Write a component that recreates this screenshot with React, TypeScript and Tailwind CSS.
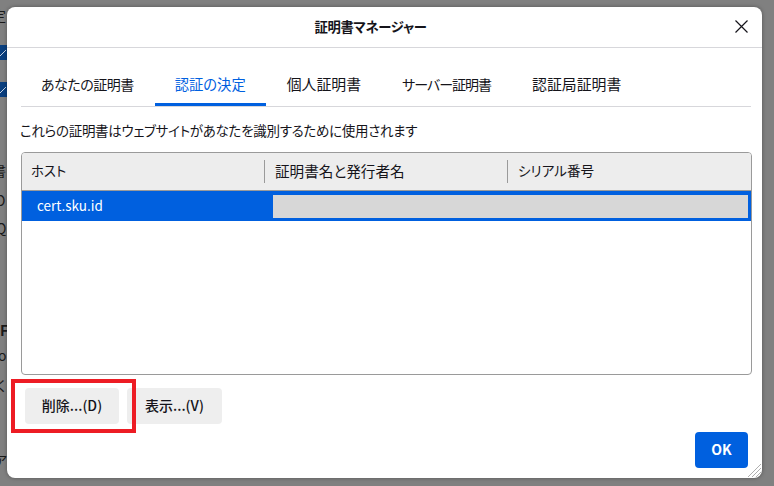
const font = "font-['Noto_Sans_CJK_JP','Noto_Sans',sans-serif]";

function Tab({ label, active, size }: { label: string; active?: boolean; size: string }) {
  return (
    <div
      className={`flex h-[39px] items-center justify-center border-b-[3px] px-5 pb-[2px] ${size} ${
        active ? "border-[#0060df] text-[#0060df]" : "border-transparent text-[#15141a]"
      }`}
    >
      {label}
    </div>
  );
}

function HeaderCell({ label, className, size }: { label: string; className: string; size: string }) {
  return (
    <div className={`flex h-full items-center pb-[2px] ${className}`}>
      <span className={`${size} text-[#15141a]`}>{label}</span>
    </div>
  );
}

function Button({ label, className }: { label: string; className: string }) {
  return (
    <div className={`flex h-9 items-center justify-center rounded-[4px] bg-[#eeeeee] pb-[2px] text-[14px] font-medium text-[#15141a] ${className}`}>
      {label}
    </div>
  );
}

function BackCheck() {
  return (
    <span className="flex h-[15px] w-[7px] items-center overflow-hidden bg-[#0a3f7f]">
      <svg className="h-[10px] w-[7px] shrink-0" viewBox="0 0 7 10" fill="none" stroke="#c8d4e4" strokeWidth="1">
        <path d="M0 8 6 2" />
      </svg>
    </span>
  );
}

export default function App() {
  return (
    <div className={`relative h-[486px] w-[774px] overflow-hidden bg-[#808080] ${font} [font-feature-settings:'palt']`}>
      <div className="flex h-full w-[40px] flex-col text-[14px] leading-[20px] text-[#1a1a1a]">
        <span className="-ml-[8px] mt-[5px] h-[20px]">定</span>
        <div className="mt-[20px]"><BackCheck /></div>
        <div className="mt-[22px]"><BackCheck /></div>
        <span className="-ml-[8px] mt-[63px] h-[20px]">書</span>
        <span className="-ml-[5px] mt-[10px] h-[20px]">O</span>
        <span className="-ml-[4px] mt-[8px] h-[20px] underline">Q</span>
        <span className="mt-[82px] h-[20px] font-bold">F</span>
        <span className="-ml-[2px] mt-[5px] h-[20px]">o</span>
        <span className="-ml-[4px] mt-[10px] h-[20px]">く</span>
        <span className="-ml-[6px] mt-[55px] h-[20px]">ア</span>
      </div>

      <div className="absolute left-[7px] top-[7px] flex h-[471px] w-[755px] flex-col overflow-hidden rounded-[8px] bg-white shadow-[0_0_4px_rgba(0,0,0,0.35)]">
        <div className="relative flex h-[41px] shrink-0 items-center justify-center border-b border-[#d7d7db] pr-[28px] text-[13.33px] font-semibold tracking-[-0.3px] text-[#15141a]">
          証明書マネージャー
          <svg className="absolute right-[13px] top-[12px] h-[15px] w-[15px]" viewBox="0 0 15 15" fill="none" stroke="#15141a" strokeWidth="1.2">
            <path d="M1.5 1.5 13.5 13.5M13.5 1.5 1.5 13.5" />
          </svg>
        </div>

        <div className="flex grow flex-col pl-[14px] pr-[11px]">
          <div className="mt-[19px] flex gap-[1px] border-b border-[#d7d7db]">
            <Tab label="あなたの証明書" size="text-[14px] tracking-[-0.5px]" />
            <Tab label="認証の決定" size="text-[14.3px]" active />
            <Tab label="個人証明書" size="text-[14.9px]" />
            <Tab label="サーバー証明書" size="text-[14px] tracking-[-1px]" />
            <Tab label="認証局証明書" size="text-[14.9px]" />
          </div>

          <p className="-ml-px mt-[13px] text-[13.5px] leading-[20px] tracking-[-0.3px] text-[#15141a]">
            これらの証明書はウェブサイトがあなたを識別するために使用されます
          </p>

          <div className="mt-[12px] flex h-[223px] w-[731px] flex-col overflow-hidden rounded-[4px] border border-[#9a9a9a]">
            <div className="flex h-[38px] shrink-0 items-center border-b border-[#9a9a9a] bg-[#ededed]">
              <HeaderCell label="ホスト" size="text-[13.33px]" className="w-[242px] pl-[9px]" />
              <div className="h-[23px] w-px bg-[#9a9a9a]" />
              <HeaderCell label="証明書名と発行者名" size="text-[14.6px]" className="w-[242px] pl-[10px]" />
              <div className="h-[23px] w-px bg-[#9a9a9a]" />
              <HeaderCell label="シリアル番号" size="text-[13.6px]" className="grow pl-[10px]" />
            </div>
            <div className="flex h-[30px] shrink-0 items-center bg-[#0060df] pr-[3px]">
              <span className="w-[251px] pb-[2px] pl-[15px] text-[13.5px] text-white">cert.sku.id</span>
              <div className="h-[23px] grow bg-[#d7d7d7]" />
            </div>
          </div>

          <div className="mt-[13px] flex gap-[8px] pl-[4px]">
            <Button label="削除...(D)" className="w-[94px]" />
            <Button label="表示...(V)" className="w-[95px]" />
          </div>

          <div className="mt-[8px] flex justify-end pr-[3px]">
            <div className="flex h-9 w-[53px] items-center justify-center rounded-[4px] bg-[#0060df] pb-[2px] text-[14px] font-semibold text-white">
              OK
            </div>
          </div>
        </div>

        <svg className="absolute bottom-0 right-0 h-4 w-4" viewBox="0 0 16 16" fill="none" stroke="#9a9a9a" strokeWidth="0.8">
          <path d="M2 15 15 2M6 15 15 6M10 15 15 10" />
        </svg>
      </div>

      <div className="absolute left-[11px] top-[379px] h-[54px] w-[125px] border-[4px] border-[#ed1c24]" />
    </div>
  );
}
